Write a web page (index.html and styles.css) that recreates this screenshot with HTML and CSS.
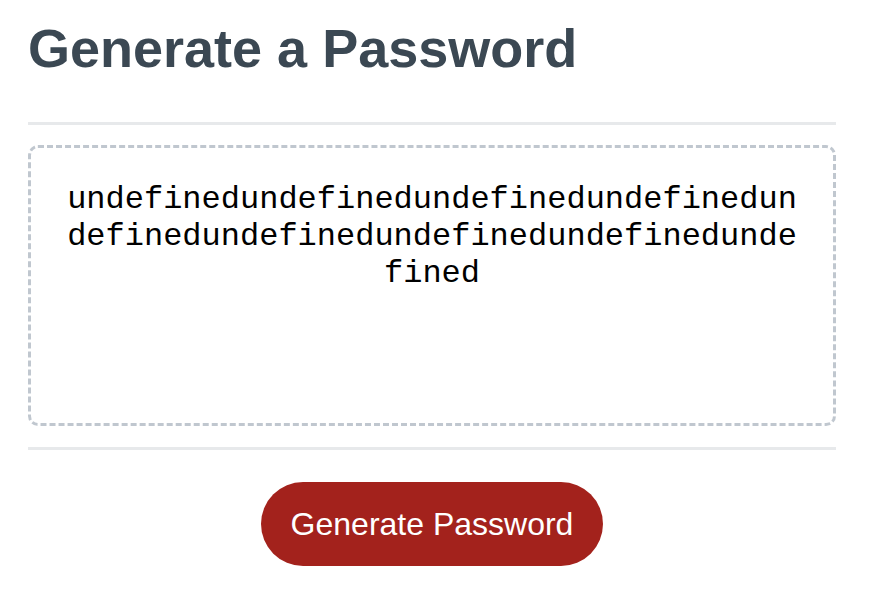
FILE: index.html
```html
<!DOCTYPE html>
<html lang="en">
<head>
<meta charset="UTF-8">
<title>Password Generator</title>
<link rel="stylesheet" href="styles.css">
</head>
<body>
  <div class="card">
    <div class="card-header">
      <h1 class="title">Generate a Password</h1>
    </div>
    <div class="divider"></div>
    <div class="card-body">
      <textarea class="password" readonly aria-label="Generated Password">undefinedundefinedundefinedundefinedundefinedundefinedundefinedundefinedundefined</textarea>
    </div>
    <div class="divider"></div>
    <div class="card-footer">
      <button class="btn" type="button">Generate Password</button>
    </div>
  </div>
</body>
</html>
```

FILE: styles.css
```css
*, *::before, *::after {
  box-sizing: border-box;
}

html, body {
  margin: 0;
  padding: 0;
  background: #ffffff;
}

body {
  font-family: "Liberation Sans", Arial, sans-serif;
}

.card {
  width: 808px;
  margin-left: 28px;
  display: flex;
  flex-direction: column;
}

.card-header {
  padding-top: 21px;
}

.title {
  margin: 0;
  font-size: 54px;
  line-height: 54px;
  font-weight: 700;
  color: #3b4853;
}

.divider {
  height: 3px;
  background: #e7e9eb;
}

.card-header + .divider {
  margin-top: 47px;
}

.card-body {
  padding: 20px 0 21px;
}

.password {
  display: block;
  width: 100%;
  height: 281px;
  margin: 0;
  padding: 33px 28px 0;
  border: 3px dashed #c0c7cf;
  border-radius: 10px;
  font-family: "Liberation Mono", "Courier New", monospace;
  font-size: 32px;
  line-height: normal;
  color: #000000;
  text-align: center;
  resize: none;
  overflow: hidden;
  outline: none;
  background: #ffffff;
  -webkit-appearance: none;
  appearance: none;
}

.card-footer {
  display: flex;
  justify-content: center;
  padding-top: 32px;
}

.btn {
  border: none;
  background: #a3221c;
  color: #ffffff;
  font-family: "Liberation Sans", Arial, sans-serif;
  font-size: 32px;
  line-height: 36px;
  padding: 24px 30px;
  border-radius: 42px;
  cursor: pointer;
}
```
